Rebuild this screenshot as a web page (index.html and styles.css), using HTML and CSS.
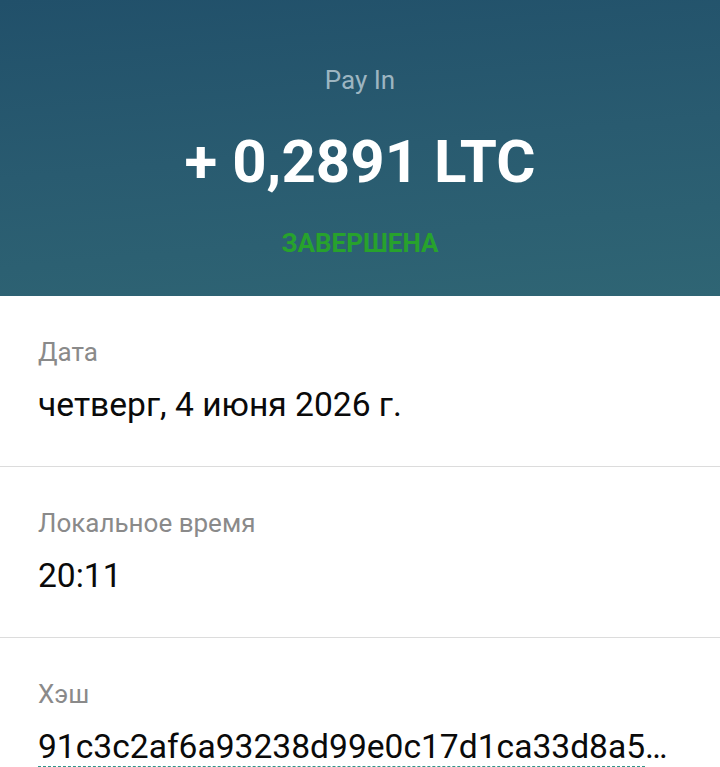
FILE: index.html
```html
<!DOCTYPE html>
<html lang="ru">
<head>
  <meta charset="UTF-8" />
  <title>Pay In</title>
  <link rel="stylesheet" href="styles.css">
</head>
<body>
  <header class="summary">
    <div class="summary-type">Pay In</div>
    <div class="summary-amount">+ 0,2891 LTC</div>
    <div class="summary-status">ЗАВЕРШЕНА</div>
  </header>

  <div class="details">
    <div class="detail-row">
      <div class="detail-label">Дата</div>
      <div class="detail-value">четверг, 4 июня 2026 г.</div>
    </div>
    <div class="detail-row">
      <div class="detail-label">Локальное время</div>
      <div class="detail-value">20:11</div>
    </div>
    <div class="detail-row">
      <div class="detail-label">Хэш</div>
      <div class="detail-value"><span class="hash-link">91c3c2af6a93238d99e0c17d1ca33d8a5</span>…</div>
    </div>
  </div>
</body>
</html>
```

FILE: styles.css
```css
body {
  margin: 0;
  font-family: Roboto, 'Noto Sans', sans-serif;
  background: #fff;
  height: 100vh;
  overflow: hidden;
}

.summary {
  height: 296px;
  box-sizing: border-box;
  padding-top: 65px;
  display: flex;
  flex-direction: column;
  align-items: center;
  background: linear-gradient(175deg, #21506a 0%, #295b70 50%, #2f6574 100%);
}

.summary-type {
  font-size: 26px;
  line-height: 30px;
  color: #9db5c1;
}

.summary-amount {
  margin-top: 31px;
  font-size: 60px;
  line-height: 72px;
  font-weight: 700;
  color: #fff;
}

.summary-status {
  margin-top: 29px;
  font-size: 26px;
  line-height: 32px;
  font-weight: 700;
  color: #27a22d;
}

.detail-row {
  padding: 41px 38px 41px;
  border-bottom: 1px solid #dcdcdc;
}

.detail-label {
  font-size: 26px;
  line-height: 30px;
  color: #8a8a8a;
}

.detail-value {
  margin-top: 18px;
  font-size: 33.6px;
  line-height: 40px;
  color: #0a0a0a;
  white-space: nowrap;
}

.hash-link {
  border-bottom: 1px dashed #2f9488;
}
```
